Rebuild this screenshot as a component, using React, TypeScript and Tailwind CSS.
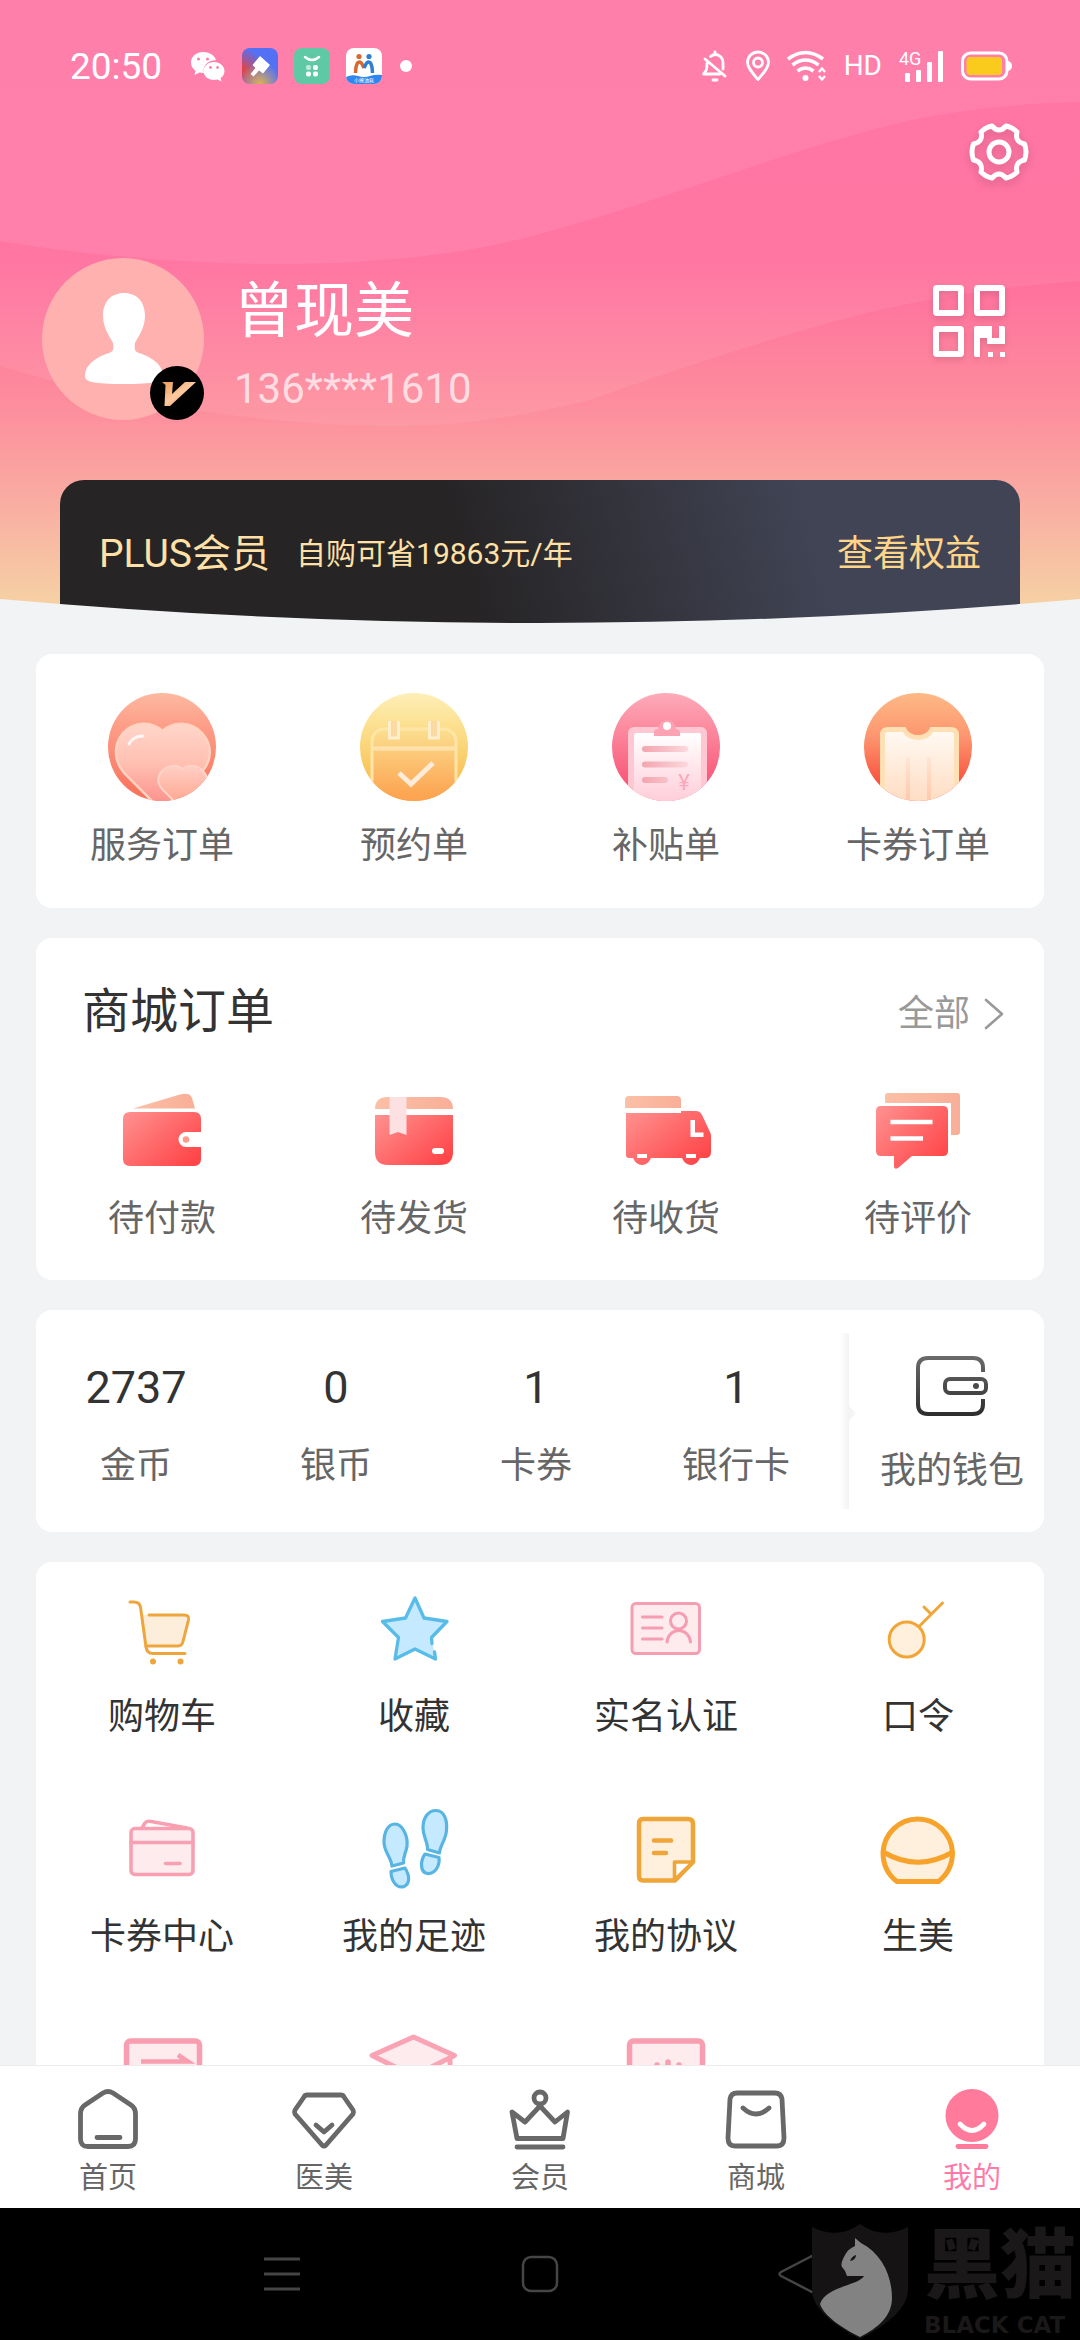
import React from 'react';

function WeChatIcon() {
  return (
    <svg className="h-9 w-9" viewBox="0 0 36 36">
      <path fill="#fff" d="M13 4C6.400 4 1 8.500 1 14.500c0 3.500 1.800 6.300 4.500 8.200L4.500 27l5-2.600c1.200.3 2.300.5 3.500.5h1c-2-7 4-13 12-12.700C24.500 7 19 4 13 4z" />
      <path fill="#fff" d="M24 14c-5.800 0-10.500 4-10.500 9S18.200 32 24 32c1.200 0 2.400-.2 3.500-.5l4 2-1-3.500c2.500-1.600 4-4.100 4-7 0-5-4.700-9-10.500-9z" />
      <g fill="#ff7fab">
        <circle cx="8.500" cy="11" r="1.600" />
        <circle cx="17.500" cy="11" r="1.600" />
        <circle cx="20.500" cy="19.500" r="1.400" />
        <circle cx="27.500" cy="19.500" r="1.400" />
      </g>
    </svg>
  );
}

function BrushAppIcon() {
  return (
    <svg className="h-9 w-9" viewBox="0 0 36 36">
      <defs>
        <radialGradient id="brushRed" cx="0" cy="0.6" r="0.6">
          <stop offset="0" stopColor="#e8403c" />
          <stop offset="1" stopColor="#e8403c" stopOpacity="0" />
        </radialGradient>
        <radialGradient id="brushGold" cx="0.5" cy="1" r="0.6">
          <stop offset="0" stopColor="#e0b050" />
          <stop offset="1" stopColor="#e0b050" stopOpacity="0" />
        </radialGradient>
      </defs>
      <rect width="36" height="36" rx="8" fill="#5470f5" />
      <rect width="36" height="36" rx="8" fill="url(#brushRed)" />
      <rect width="36" height="36" rx="8" fill="url(#brushGold)" />
      <path fill="#fff" d="M18 8l10 9-7 8.500-4-3-5.500 6-3-2.500 5-6-3-3z" />
    </svg>
  );
}

function SmileAppIcon() {
  return (
    <svg className="h-9 w-9" viewBox="0 0 36 36">
      <rect width="36" height="36" rx="8" fill="#5fc9a6" />
      <path d="M11 9q7 6 14 0" fill="none" stroke="#fff" strokeWidth="2.500" strokeLinecap="round" />
      <rect x="12" y="17" width="5" height="5" rx="2" fill="#bfe9dc" />
      <rect x="19" y="17" width="5" height="5" rx="2" fill="#fff" />
      <rect x="12" y="23.500" width="5" height="5" rx="2" fill="#fff" />
      <rect x="19" y="23.500" width="5" height="5" rx="2" fill="#fff" />
    </svg>
  );
}

function PeopleAppIcon() {
  return (
    <svg className="h-9 w-9" viewBox="0 0 36 36">
      <rect width="36" height="36" rx="8" fill="#fff" />
      <path d="M0 29q6-3 12-1t12 0 12-1v1a8 8 0 0 1-8 8H8a8 8 0 0 1-8-7z" fill="#2f86ee" />
      <circle cx="13" cy="8.500" r="2.600" fill="#d8682f" />
      <circle cx="23" cy="8.500" r="2.600" fill="#2f7fd0" />
      <path d="M9.500 25c0-8 2-11 4-11s3 3 4.500 6" fill="none" stroke="#d8682f" strokeWidth="3.500" />
      <path d="M18 20c1.500-3 2.500-6 4.500-6s4 3 4 11" fill="none" stroke="#2f7fd0" strokeWidth="3.500" />
      <text x="18" y="34" textAnchor="middle" fontSize="5" fill="#fff">小熊油耗</text>
    </svg>
  );
}

function StatusBar() {
  return (
    <div className="flex h-[52px] items-center justify-between pl-[70px] pr-[68px] text-white">
      <div className="flex items-center gap-4">
        <span className="mr-3 text-[37px] leading-none">20:50</span>
        <WeChatIcon />
        <BrushAppIcon />
        <SmileAppIcon />
        <PeopleAppIcon />
        <span className="ml-0.5 h-3 w-3 rounded-full bg-white" />
      </div>
      <div className="flex items-center gap-[17px]">
        <svg className="h-8 w-7" viewBox="0 0 28 32" fill="none" stroke="#fff" strokeWidth="2.800" strokeLinecap="round" strokeLinejoin="round">
          <path d="M14 2v2M9.500 6.500C15 2 22 6 22 13v6M4 9l20 17M6 13c0 6-.5 8-3.500 11H19M12 30h4" />
        </svg>
        <svg className="h-8 w-6" viewBox="0 0 24 32" fill="none" stroke="#fff" strokeWidth="2.800">
          <path d="M12 29.500C6 22.500 1.500 17.500 1.500 12.500a10.500 10.500 0 0 1 21 0c0 5-4.500 10-10.500 17z" strokeLinejoin="round" />
          <circle cx="12" cy="12.500" r="4.500" />
        </svg>
        <svg className="h-8 w-10" viewBox="0 0 40 32" fill="none" stroke="#fff" strokeWidth="3.600">
          <path d="M1 9q17.500-13 35 0M5.500 15q13-10 26 0M10.500 21q8-6 16 0" />
          <circle cx="18.500" cy="28" r="3" fill="#fff" stroke="none" />
          <path d="M32 22l3-3.500 3 3.500M32 26l3 3.500 3-3.500" strokeWidth="2.400" />
        </svg>
        <span className="text-[28px] leading-none">HD</span>
        <span className="relative">
          <svg className="h-8 w-[45px]" viewBox="0 0 45 32" fill="#fff">
            <rect x="6" y="23" width="5" height="9" rx="1" />
            <rect x="17" y="20" width="5" height="12" rx="1" />
            <rect x="28" y="12" width="5" height="20" rx="1" />
            <rect x="39" y="1" width="5" height="31" rx="1" />
          </svg>
          <span className="absolute left-0 top-0 text-[18px] leading-none">4G</span>
        </span>
        <svg className="h-8 w-[51px]" viewBox="0 0 51 32">
          <rect x="1.500" y="3" width="44.500" height="26" rx="8" fill="none" stroke="#fff" strokeWidth="3" />
          <rect x="5.500" y="7" width="35.500" height="18" rx="4" fill="#facb1d" />
          <path d="M47 11q4 1 4 5t-4 5z" fill="#fff" />
        </svg>
      </div>
    </div>
  );
}

function HeaderBackdrop() {
  return (
    <svg className="absolute inset-0 h-full w-full" viewBox="0 0 1080 624" preserveAspectRatio="none">
      <defs>
        <linearGradient id="sky" x1="0" y1="0" x2="0" y2="1">
          <stop offset="0" stopColor="#ff6b9e" />
          <stop offset="0.420" stopColor="#ff6c9d" />
          <stop offset="0.660" stopColor="#fd8f9d" />
          <stop offset="0.800" stopColor="#f9aca2" />
          <stop offset="0.960" stopColor="#f6cfa4" />
          <stop offset="1" stopColor="#f6d2a4" />
        </linearGradient>
      </defs>
      <rect width="1080" height="624" fill="url(#sky)" />
      <path d="M0 0V366C120 402 260 426 400 426C470 426 540 412 590 400C680 368 780 335 870 312C940 296 1010 286 1080 281V0Z" fill="#fff" fillOpacity="0.070" />
      <path d="M0 0V241C90 256 190 264 280 264C400 264 480 250 540 234C680 195 800 145 912 120C970 108 1030 103 1080 102V0Z" fill="#fff" fillOpacity="0.080" />
    </svg>
  );
}

function Header() {
  return (
    <header className="relative pt-10">
      <HeaderBackdrop />
      <div className="relative">
        <StatusBar />
        <div className="mt-6 flex justify-end pr-[45px]">
          <button aria-label="设置">
            <svg className="h-[72px] w-[72px] drop-shadow-lg" viewBox="0 0 72 72" fill="none" stroke="#fff" strokeWidth="5" strokeLinejoin="round">
              <path d="M29 10Q36 18 43 10Q49 11 54 16Q51.500 26 61.500 28Q64.500 36 61.500 44Q51.500 46 54 56Q49 61 43 62Q36 54 29 62Q23 61 18 56Q20.500 46 10.500 44Q7.500 36 10.500 28Q20.500 26 18 16Q23 11 29 10Z" />
              <circle cx="36" cy="36" r="10" />
            </svg>
          </button>
        </div>
        <div className="mt-[70px] flex items-start pl-[42px] pr-[75px]">
          <div className="relative h-[162px] w-[162px]">
            <svg className="h-full w-full" viewBox="0 0 162 162">
              <circle cx="81" cy="81" r="81" fill="#ffb1b0" />
              <path fill="#fff" d="M82 35C95 35 103 44 103 58C103 70 96 79 93 85C92 91 93 94 97 95C110 99 121 107 121 118C121 124 112 126 82 126C52 126 43 124 43 118C43 107 54 99 67 95C71 94 72 91 71 85C68 79 61 70 61 58C61 44 69 35 82 35Z" />
            </svg>
            <svg className="absolute bottom-0 right-0 h-[54px] w-[54px]" viewBox="0 0 54 54">
              <defs>
                <linearGradient id="vip" x1="0" y1="0" x2="1" y2="1">
                  <stop offset="0" stopColor="#e79a55" />
                  <stop offset="0.500" stopColor="#ffc9a0" />
                  <stop offset="1" stopColor="#c9743e" />
                </linearGradient>
              </defs>
              <circle cx="27" cy="27" r="27" fill="#000" />
              <path d="M12 16H23L22 28L35 16H46L20 40H14.500L15.500 19Z" fill="url(#vip)" />
            </svg>
          </div>
          <div className="ml-[30px] flex-1 pt-2.5">
            <h1 className="text-[60px] leading-[88px] text-white">曾现美</h1>
            <p className="mt-2 text-[42px] leading-[50px] text-white/70">136****1610</p>
          </div>
          <button aria-label="二维码" className="mt-[27px]">
            <svg className="h-[72px] w-[72px] drop-shadow-md" viewBox="0 0 72 72">
              <g fill="none" stroke="#fff" strokeWidth="6">
                <rect x="3" y="3" width="25" height="25" rx="1" />
                <rect x="44" y="3" width="25" height="25" rx="1" />
                <rect x="3" y="44" width="25" height="25" rx="1" />
              </g>
              <path fill="#fff" d="M43 41H59V53H66V41H70a2 2 0 0 1 2 2V59H54V53H47V72H43a2 2 0 0 1-2-2V43a2 2 0 0 1 2-2zM55 67H60V72H55zM67 67H72V72H67z" />
            </svg>
          </button>
        </div>
        <div className="mx-[60px] mt-[60px] flex h-36 items-center rounded-t-3xl bg-[linear-gradient(75deg,#262425_0%,#262425_42%,#414455_78%)] px-[39px] pt-1">
          <span className="text-[39px] leading-[54px] text-[#ffe0a6]">PLUS会员</span>
          <span className="ml-[26px] flex-1 text-[30px] leading-[54px] text-[#ffe0a6]">自购可省19863元/年</span>
          <a href="#plus" className="text-4xl leading-[54px] text-[#ffd58a]">查看权益</a>
        </div>
      </div>
      <svg className="absolute bottom-0 left-0 h-[25px] w-full" viewBox="0 0 1080 25" preserveAspectRatio="none">
        <path d="M0 0Q270 24 540 24T1080 0V25H0Z" fill="#f2f3f5" />
      </svg>
    </header>
  );
}

function HeartsIcon() {
  return (
    <svg className="h-[108px] w-[108px]" viewBox="0 0 108 108">
      <defs>
        <linearGradient id="heartBg" x1="0" y1="0" x2="0" y2="1">
          <stop offset="0" stopColor="#fdb9a0" />
          <stop offset="0.300" stopColor="#fd9e88" />
          <stop offset="1" stopColor="#f86f5a" />
        </linearGradient>
        <linearGradient id="heartBig" x1="0" y1="0" x2="0" y2="1">
          <stop offset="0" stopColor="#ffd6cb" />
          <stop offset="0.500" stopColor="#ffbfb0" />
          <stop offset="1" stopColor="#fc8f8b" />
        </linearGradient>
        <linearGradient id="heartSmall" x1="0" y1="0" x2="0" y2="1">
          <stop offset="0" stopColor="#ffcfc6" />
          <stop offset="1" stopColor="#ff9f85" />
        </linearGradient>
        <clipPath id="disc"><circle cx="54" cy="54" r="54" /></clipPath>
      </defs>
      <g clipPath="url(#disc)">
        <rect width="108" height="108" fill="url(#heartBg)" />
        <path d="M54.500 38C44 28 26 28 15 40C5 52 6 68 16 80L48 112H62L93 80C104 68 105 52 94 40C83 28 65 28 54.500 38Z" fill="url(#heartBig)" stroke="#ffd3c0" strokeWidth="2.500" />
        <path d="M74.500 76C69 71 59 72 54 78C48 85 50 92 55 97L74 116L94 97C100 91 101 84 95 78C90 72 80 71 74.500 76Z" fill="url(#heartSmall)" stroke="#ffd3c8" strokeWidth="2" />
        <path d="M21 51Q25 43 35 43" fill="none" stroke="#fff" strokeOpacity="0.800" strokeWidth="3" strokeLinecap="round" />
      </g>
    </svg>
  );
}

function CalendarIcon() {
  return (
    <svg className="h-[108px] w-[108px]" viewBox="0 0 108 108">
      <defs>
        <linearGradient id="calBg" x1="0" y1="0" x2="0" y2="1">
          <stop offset="0" stopColor="#feefb8" />
          <stop offset="0.400" stopColor="#fbdb83" />
          <stop offset="1" stopColor="#f7b23f" />
        </linearGradient>
        <linearGradient id="calBody" x1="0" y1="0" x2="0" y2="1">
          <stop offset="0" stopColor="#fbdf90" />
          <stop offset="0.800" stopColor="#fca451" />
        </linearGradient>
      </defs>
      <g clipPath="url(#disc)">
        <rect width="108" height="108" fill="url(#calBg)" />
        <rect x="12" y="36" width="84" height="84" rx="12" fill="url(#calBody)" stroke="#ffe5a6" strokeWidth="3" />
        <path d="M13 55.500H95" stroke="#ffe0a8" strokeWidth="4.500" />
        <path d="M29.500 28V45H38.500V28M69.500 28V45H78.500V28" fill="#fbd9a0" stroke="#ffeecb" strokeWidth="3" />
        <path d="M39 80L51 91L73 70" fill="none" stroke="#ffebd9" strokeWidth="5" />
      </g>
    </svg>
  );
}

function ClipboardIcon() {
  return (
    <svg className="h-[108px] w-[108px]" viewBox="0 0 108 108">
      <defs>
        <linearGradient id="clipBg" x1="0" y1="0" x2="0" y2="1">
          <stop offset="0" stopColor="#fdabb9" />
          <stop offset="0.400" stopColor="#fb8399" />
          <stop offset="1" stopColor="#f8456b" />
        </linearGradient>
        <linearGradient id="clipPaper" x1="0" y1="0" x2="0" y2="1">
          <stop offset="0" stopColor="#ffffff" />
          <stop offset="0.800" stopColor="#ffcbd8" />
        </linearGradient>
        <linearGradient id="clipLine" gradientUnits="userSpaceOnUse" x1="30" y1="0" x2="77" y2="0">
          <stop offset="0" stopColor="#f3a4ae" />
          <stop offset="1" stopColor="#fbdadf" />
        </linearGradient>
      </defs>
      <g clipPath="url(#disc)">
        <rect width="108" height="108" fill="url(#clipBg)" />
        <rect x="16" y="34" width="79" height="90" rx="6" fill="#ffc7d1" />
        <rect x="22" y="40" width="67" height="90" rx="2" fill="url(#clipPaper)" />
        <path d="M42 43V40Q42 36 46 36A9 9 0 1 1 64 36Q68 36 68 40V43Z" fill="#fba3b3" />
        <circle cx="55" cy="33" r="4" fill="#fff" />
        <g fill="url(#clipLine)">
          <rect x="30" y="53" width="46" height="6" rx="3" />
          <rect x="30" y="68.500" width="46" height="6" rx="3" />
          <rect x="30" y="84" width="26" height="6" rx="3" />
        </g>
        <text x="72" y="97" textAnchor="middle" fontSize="22" fill="#f9a9bb">¥</text>
      </g>
    </svg>
  );
}

function TicketIcon() {
  return (
    <svg className="h-[108px] w-[108px]" viewBox="0 0 108 108">
      <defs>
        <linearGradient id="ticketBg" x1="0" y1="0" x2="0" y2="1">
          <stop offset="0" stopColor="#fdb985" />
          <stop offset="0.400" stopColor="#fd9670" />
          <stop offset="0.850" stopColor="#f9503c" />
        </linearGradient>
        <linearGradient id="ticketBody" x1="0" y1="0" x2="0" y2="1">
          <stop offset="0" stopColor="#fffaf5" />
          <stop offset="0.800" stopColor="#ffdfc6" />
        </linearGradient>
        <linearGradient id="ticketLine" gradientUnits="userSpaceOnUse" x1="0" y1="62" x2="0" y2="108">
          <stop offset="0" stopColor="#ffd0b4" stopOpacity="0.200" />
          <stop offset="1" stopColor="#ffc9ae" />
        </linearGradient>
      </defs>
      <g clipPath="url(#disc)">
        <rect width="108" height="108" fill="url(#ticketBg)" />
        <path d="M18.500 120V42Q18.500 36.500 24 36.500H40Q44 44.500 54 44.500T68 36.500H87Q92.500 36.500 92.500 42V120Z" fill="url(#ticketBody)" stroke="#ffdfb4" strokeWidth="5" />
        <path d="M42 64H46V108H42ZM63 64H67V108H63Z" fill="url(#ticketLine)" />
      </g>
    </svg>
  );
}

function SharedGradients() {
  return (
    <svg className="absolute h-0 w-0">
      <defs>
        <linearGradient id="red" x1="0" y1="0" x2="1" y2="0.800">
          <stop offset="0" stopColor="#ff9291" />
          <stop offset="1" stopColor="#ff4548" />
        </linearGradient>
        <linearGradient id="peach" x1="0" y1="0" x2="1" y2="0">
          <stop offset="0" stopColor="#fbc0a6" />
          <stop offset="1" stopColor="#f9ae98" />
        </linearGradient>
        <linearGradient id="dark" gradientUnits="userSpaceOnUse" x1="0" y1="0" x2="0" y2="60">
          <stop offset="0" stopColor="#6b6b6b" />
          <stop offset="1" stopColor="#2d2d2d" />
        </linearGradient>
      </defs>
    </svg>
  );
}

const toPay = (
  <>
    <path d="M25 22.500L72 8.500Q82 6 84 12L87 22.500Z" fill="url(#peach)" />
    <path d="M22 26H86Q93 26 93 33V46H78A7.500 7.500 0 0 0 78 61H93V73Q93 80 86 80H22Q15 80 15 73V33Q15 26 22 26Z" fill="url(#red)" />
    <circle cx="78" cy="53.500" r="3.300" fill="#ff9d8c" />
  </>
);

const toShip = (
  <>
    <path d="M15 23Q15 11 28 11H80Q93 11 93 23Z" fill="url(#peach)" />
    <path d="M15 29H93V66Q93 79 80 79H28Q15 79 15 66Z" fill="url(#red)" />
    <path d="M29.500 11H46.500V49L38 46L29.500 49Z" fill="#fde0e1" />
    <rect x="72" y="62" width="12" height="6" rx="3" fill="#fff" />
  </>
);

const toReceive = (
  <>
    <path d="M13 22V14Q13 10 17 10H65Q69 10 69 14V22Z" fill="url(#peach)" />
    <path d="M14 27H69V25H84Q88 25 90 29L98 46Q99 48 99 50V66Q99 72 93 72H88Q85 79 79 79T70 72H39Q36 79 30 79T21 72H17Q14 72 14 69Z" fill="url(#red)" />
    <path d="M25 68H35V72H25zM74 68H84V72H74zM78.500 34H83V46.500H91.500V51H78.500z" fill="#fff" />
  </>
);

const toReview = (
  <>
    <path d="M21 17V10Q21 7 24 7H93Q96 7 96 10V46Q96 49 93 49H87V17Z" fill="url(#peach)" />
    <path d="M17 20H79Q84 20 84 25V65Q84 70 79 70H48L34 82Q30 84 30 80V70H17Q12 70 12 65V25Q12 20 17 20Z" fill="url(#red)" />
    <path d="M26.500 36H68.500M26.500 52.500H59" stroke="#fff" strokeWidth="4.400" />
  </>
);

const cart = (
  <g fill="none" stroke="#eea53b" strokeWidth="3" strokeLinecap="round" strokeLinejoin="round">
    <path d="M34.500 31H76Q81.500 31 80.500 36L75 57.500Q74 62 70 62H38Z" fill="#fdeedb" stroke="none" />
    <path d="M22 18H26Q31.500 18 32.500 23L38 63Q39 69.500 45 69.500H77" />
    <path d="M41 31H76Q81.500 31 80.500 36L75 57.500Q74 62 70 62H38" />
    <circle cx="45" cy="77.500" r="1.500" />
    <circle cx="72.500" cy="77.500" r="1.500" />
  </g>
);

const star = (
  <g stroke="#58bce9" strokeWidth="3.300" strokeLinecap="round" strokeLinejoin="round">
    <path d="M55 14L64 34L87 37.500L71.500 53.500L75.500 75L55 65L35 75L38.500 53.500L22.500 37.500L45.500 34Z" fill="#c5e9ff" stroke="none" />
    <path d="M72 59.500L71.500 53.500L87 37.500L64 34L55 14L45.500 34L22.500 37.500L38.500 53.500L35 75L55 65L75.500 75L74.500 68" fill="none" />
  </g>
);

const idCard = (
  <g fill="none" stroke="#f59db1" strokeWidth="3" strokeLinecap="round">
    <rect x="20" y="19.500" width="67.500" height="50" rx="4" fill="#feebee" />
    <path d="M30.500 33H50M30.500 44H50M30.500 55H50" />
    <circle cx="66.500" cy="37" r="8" />
    <path d="M55 58A11.800 12.800 0 0 1 78.500 58" />
  </g>
);

const keyIcon = (
  <g fill="none" stroke="#f2a537" strokeWidth="3" strokeLinecap="round">
    <circle cx="42.700" cy="55.500" r="17.500" fill="#fef0dc" />
    <path d="M55 42.500L78.500 19M60 23L67 30" />
  </g>
);

const cardCenter = (
  <g fill="none" stroke="#f8a0b1" strokeWidth="3.600" strokeLinecap="round" strokeLinejoin="round">
    <rect x="23" y="24.500" width="62" height="46" rx="4" fill="#feebee" />
    <path d="M34 24L37 19Q39 16.500 43 17.500L79 24M23 38.500H85M57.500 59.500H72" />
  </g>
);

const footprints = (
  <g fill="#c5e9ff" stroke="#58b4e2" strokeWidth="3.200" strokeLinejoin="round">
    <path d="M35 20C43 20 48 33 47 42C46 49 43 52 43.500 59L32 62C31 53 24 48 24 38C24 28 28 20 35 20Z" />
    <path d="M31 67.500L45 64C50 72 50 80 44 82.500C36 85 31 76 31 67.500Z" />
    <path d="M76 6.500C84 6.500 87.500 16 86.500 26C86 36 80 41 79.500 49L67.500 45.500C68 38 63 33 63 24C63 14 68 6.500 76 6.500Z" />
    <path d="M65 50L79 53.500C80 62 75 70 67.500 69.500C60 68.500 60 57 65 50Z" />
  </g>
);

const agreement = (
  <g fill="none" stroke="#f0a538" strokeWidth="4.500" strokeLinecap="round" strokeLinejoin="round">
    <path d="M31 15H76Q81 15 81 20V58L63 76.500H31Q27 76.500 27 72V20Q27 15 31 15Z" fill="#fef0dc" />
    <path d="M62.500 76V58H81Z" fill="#fff" strokeWidth="3.600" />
    <path d="M42 36.500H59M42 49H54" />
  </g>
);

const beauty = (
  <g fill="none" stroke="#f7a32b" strokeWidth="5" strokeLinejoin="round">
    <path d="M33 77.500C23 70 19 60 19 48.500A34.800 35.500 0 0 1 88.500 48.500C88.500 60 84 70 74.500 77.500Z" fill="#fef0dc" />
    <path d="M20 48.500Q54 68 88 48.500" />
  </g>
);

const transfer = (
  <g fill="none" stroke="#f99db0" strokeWidth="5.500">
    <rect x="18.500" y="17" width="73" height="60" rx="4" fill="#feebee" />
    <path d="M33 37.500H80L70 31" strokeWidth="4.500" />
  </g>
);

const academy = (
  <g fill="#feebee" stroke="#f9a3b4" strokeWidth="5" strokeLinejoin="round">
    <path d="M53.500 13L94.500 31.500L53.500 52L12 31.500Z" />
    <path d="M90 33V60" />
  </g>
);

const device = (
  <g fill="none" stroke="#f99db0" strokeWidth="5.500">
    <rect x="17.500" y="17" width="73" height="60" rx="4" fill="#feebee" />
    <path d="M56 38V60M45 41V55M67 41V55" strokeLinecap="round" />
  </g>
);

const mallOrders = [
  { label: '待付款', art: toPay },
  { label: '待发货', art: toShip },
  { label: '待收货', art: toReceive },
  { label: '待评价', art: toReview },
];

const balances = [
  { label: '金币', value: 2737 },
  { label: '银币', value: 0 },
  { label: '卡券', value: 1 },
  { label: '银行卡', value: 1 },
];

const tools = [
  { label: '购物车', art: cart },
  { label: '收藏', art: star },
  { label: '实名认证', art: idCard },
  { label: '口令', art: keyIcon },
  { label: '卡券中心', art: cardCenter },
  { label: '我的足迹', art: footprints },
  { label: '我的协议', art: agreement },
  { label: '生美', art: beauty },
];

const moreTools = [transfer, academy, device];

function Art({ children }: { children: React.ReactNode }) {
  return (
    <svg className="h-[90px] w-[108px]" viewBox="0 0 108 90">
      {children}
    </svg>
  );
}

function ServiceOrders() {
  const items = [
    { label: '服务订单', icon: <HeartsIcon /> },
    { label: '预约单', icon: <CalendarIcon /> },
    { label: '补贴单', icon: <ClipboardIcon /> },
    { label: '卡券订单', icon: <TicketIcon /> },
  ];
  return (
    <section className="grid grid-cols-4 rounded-2xl bg-white pb-[35px] pt-[39px]">
      {items.map((item) => (
        <button key={item.label} className="flex flex-col items-center gap-[18px]">
          {item.icon}
          <span className="text-4xl leading-[54px] text-[#666]">{item.label}</span>
        </button>
      ))}
    </section>
  );
}

function MallOrders() {
  return (
    <section className="rounded-2xl bg-white pb-[34px] pt-[38px]">
      <div className="flex items-center justify-between pl-[46px] pr-10">
        <h2 className="text-5xl leading-[72px] text-[#333]">商城订单</h2>
        <a href="#orders" className="flex items-center gap-3.5 pt-1 text-4xl leading-[68px] text-[#999]">
          全部
          <svg className="h-8 w-5" viewBox="0 0 20 32" fill="none" stroke="#999" strokeWidth="2.600" strokeLinecap="round" strokeLinejoin="round">
            <path d="M2 2L18 16L2 30" />
          </svg>
        </a>
      </div>
      <div className="mt-[38px] grid grid-cols-4">
        {mallOrders.map((item) => (
          <button key={item.label} className="flex flex-col items-center gap-4">
            <Art>{item.art}</Art>
            <span className="text-4xl leading-[54px] text-[#666]">{item.label}</span>
          </button>
        ))}
      </div>
    </section>
  );
}

function WalletCard() {
  return (
    <section className="flex items-center rounded-2xl bg-white py-5">
      <div className="grid flex-1 grid-cols-4 pt-3">
        {balances.map((item) => (
          <button key={item.label} className="flex flex-col items-center gap-6">
            <span className="text-[45px] leading-[54px] text-[#333]">{item.value}</span>
            <span className="text-4xl leading-[54px] text-[#666]">{item.label}</span>
          </button>
        ))}
      </div>
      <svg className="h-[182px] w-6" viewBox="0 0 24 182">
        <defs>
          <linearGradient id="fold" gradientUnits="userSpaceOnUse" x1="4" y1="0" x2="20" y2="0">
            <stop offset="0" stopColor="#fff" />
            <stop offset="0.560" stopColor="#f3f3f3" />
            <stop offset="1" stopColor="#f8f8f8" />
          </linearGradient>
        </defs>
        <path d="M4 3H13V74Q13 77 17 80Q22 83 17 87Q13 90 13 93V179H4Z" fill="url(#fold)" />
      </svg>
      <button className="flex w-[184px] flex-col items-center gap-7 pt-3">
        <svg className="h-[60px] w-[72px]" viewBox="0 0 72 60" fill="none" stroke="url(#dark)" strokeWidth="4">
          <path d="M67 16V12Q67 2 57 2H12Q2 2 2 12V48Q2 58 12 58H57Q67 58 67 48V43" />
          <rect x="29" y="23" width="41" height="14" rx="5" />
          <circle cx="60" cy="30" r="3" fill="#4a4a4a" stroke="none" />
        </svg>
        <span className="text-4xl leading-[54px] text-[#666]">我的钱包</span>
      </button>
    </section>
  );
}

function Tools() {
  return (
    <section className="grid grid-cols-4 gap-y-[60px] rounded-2xl bg-white pt-[22px]">
      {tools.map((item) => (
        <button key={item.label} className="flex flex-col items-center gap-4">
          <Art>{item.art}</Art>
          <span className="text-4xl leading-[54px] text-[#333]">{item.label}</span>
        </button>
      ))}
      {moreTools.map((art, i) => (
        <div key={i} className="flex justify-center">
          <Art>{art}</Art>
        </div>
      ))}
    </section>
  );
}

const tabs = [
  {
    label: '首页',
    art: <path d="M5.500 28Q5.500 22 10 19L28 7Q33 4 38 7L56 19Q60.500 22 60.500 28V53Q60.500 60.500 53 60.500H13Q5.500 60.500 5.500 53ZM22 51.500H45" />,
  },
  {
    label: '医美',
    art: <path d="M16 9H50Q52 9 53 11L62 24Q63 26 62 28L35 59Q33 61 31 59L4 28Q3 26 4 24L13 11Q14 9 16 9ZM25 39L33 46L41 39" />,
  },
  {
    label: '会员',
    art: (
      <>
        <circle cx="33" cy="12" r="6" />
        <path d="M33 20L48 36L60.500 26L56 52.500H10L5 26L18 36ZM10 61H56" />
      </>
    ),
  },
  {
    label: '商城',
    art: <path d="M14 7H52Q58 7 59 13L61 52Q61 60 54 60H12Q5 60 5 52L7 13Q8 7 14 7ZM20 22Q33 34 46 22" />,
  },
  {
    label: '我的',
    active: true,
    art: (
      <>
        <circle cx="33" cy="29.500" r="26.500" fill="#ff7a9b" stroke="none" />
        <path d="M21 38Q33 51 45 38" stroke="#fff" />
        <path d="M19 60.500H47" />
      </>
    ),
  },
];

function TabBar() {
  return (
    <nav className="relative grid grid-cols-5 border-t border-[#ececec] bg-white pb-3 pt-5">
      {tabs.map((tab) => (
        <a
          key={tab.label}
          href="#tab"
          className={tab.active ? 'flex flex-col items-center gap-2 text-[#ff7aa8]' : 'flex flex-col items-center gap-2 text-[#666]'}
        >
          <svg
            className="h-[66px] w-[66px]"
            viewBox="0 0 66 66"
            fill="none"
            stroke={tab.active ? '#ff7a9b' : '#686868'}
            strokeWidth="4.800"
            strokeLinecap="round"
            strokeLinejoin="round"
          >
            {tab.art}
          </svg>
          <span className="text-[29px] leading-9">{tab.label}</span>
        </a>
      ))}
    </nav>
  );
}

function SystemBar() {
  return (
    <div className="relative overflow-hidden bg-black">
      <div className="grid h-[132px] grid-cols-3 items-center justify-items-center px-[153px]">
        <button aria-label="最近任务">
          <svg className="h-10 w-10" viewBox="0 0 40 40" stroke="#454545" strokeWidth="3">
            <path d="M2 5H38M2 20H38M2 35H38" />
          </svg>
        </button>
        <button aria-label="主屏幕">
          <svg className="h-10 w-10" viewBox="0 0 40 40" fill="none" stroke="#454545" strokeWidth="2.500">
            <rect x="3" y="3" width="34" height="34" rx="8" />
          </svg>
        </button>
        <button aria-label="返回">
          <svg className="h-10 w-10" viewBox="0 0 40 40" fill="none" stroke="#454545" strokeWidth="2.500" strokeLinejoin="round">
            <path d="M36 3V37Q35 39 32 37L3 22Q0 20 3 18L32 3Q35 1 36 3Z" />
          </svg>
        </button>
      </div>
      <div className="absolute bottom-0 right-0 flex h-[116px] w-[268px] items-end text-[#1a1819]">
        <svg className="h-[116px] w-24 shrink-0" viewBox="0 0 96 116">
          <path d="M0 3Q26 16 48 0Q70 16 96 3V66Q96 90 48 115Q0 90 0 66Z" fill="#151314" />
          <path d="M43 14L49 19C70 30 80 52 80 74C80 92 66 104 48 113C30 104 12 92 8 80C14 62 46 62 52 52H35Q34 47 30 43Q28 40 33 31Q36 25 43 22Z" fill="#828282" />
          <path d="M38 37Q40 32 44 31Q44 36 38 37Z" fill="#151314" />
        </svg>
        <div className="ml-4 shrink-0">
          <div className="text-[76px] font-black leading-[88px]">黑猫</div>
          <div className="font-['DejaVu_Sans',sans-serif] text-[23px] font-bold leading-[30px]">BLACK CAT</div>
        </div>
      </div>
    </div>
  );
}

export default function App() {
  return (
    <div className="flex h-screen flex-col bg-[#f2f3f5] font-[Roboto,'Noto_Sans_CJK_SC',sans-serif]">
      <SharedGradients />
      <div className="min-h-0 flex-1 overflow-hidden">
        <Header />
        <main className="mt-[30px] flex flex-col gap-[30px] px-9">
          <ServiceOrders />
          <MallOrders />
          <WalletCard />
          <Tools />
        </main>
      </div>
      <TabBar />
      <SystemBar />
    </div>
  );
}
